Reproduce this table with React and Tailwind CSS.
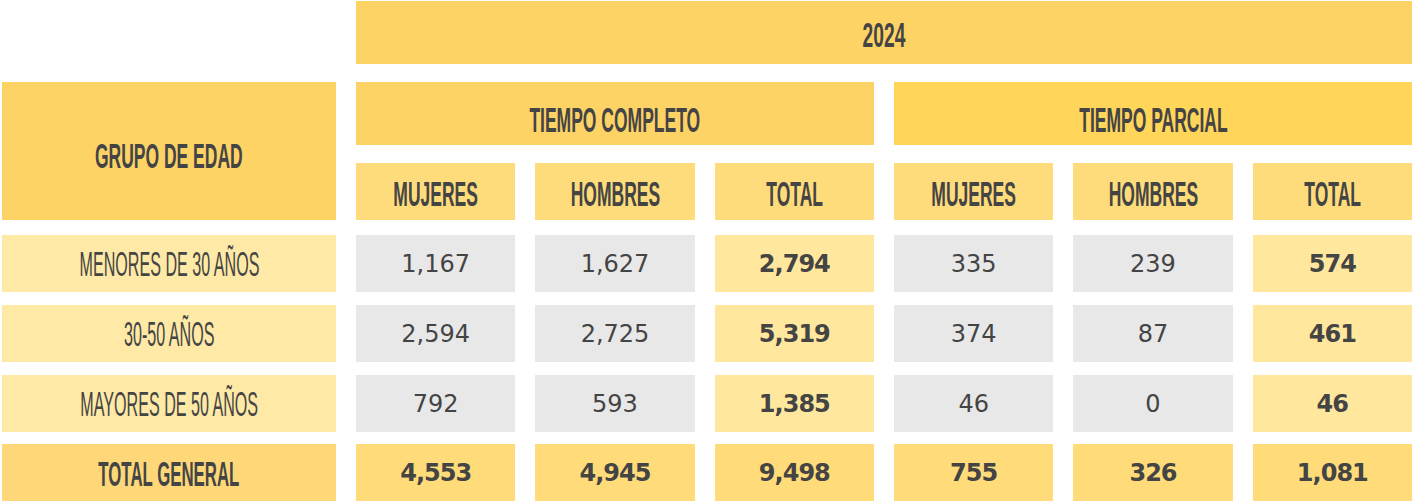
import React from "react";

const COLS = "grid grid-cols-[334px_repeat(6,minmax(0,1fr))] gap-x-5";
const COND = "inline-block whitespace-nowrap leading-none text-[35px] text-[#444] font-['Liberation_Sans',Arial,sans-serif]";
const NUM = "leading-none text-[24px] text-[#444] font-['DejaVu_Sans',sans-serif]";

function Head({ children, className = "" }) {
  return <span className={`${COND} font-bold scale-x-50 ${className}`}>{children}</span>;
}

function Label({ children, bold }) {
  return bold ? (
    <span className={`${COND} font-bold scale-x-[0.48] pt-[2px]`}>{children}</span>
  ) : (
    <span className={`${COND} font-normal scale-x-[0.46]`}>{children}</span>
  );
}

const rows = [
  { label: "MENORES DE 30 AÑOS", v: ["1,167", "1,627", "2,794", "335", "239", "574"] },
  { label: "30-50 AÑOS", v: ["2,594", "2,725", "5,319", "374", "87", "461"] },
  { label: "MAYORES DE 50 AÑOS", v: ["792", "593", "1,385", "46", "0", "46"] },
];
const totals = ["4,553", "4,945", "9,498", "755", "326", "1,081"];
const rowMargins = ["mt-[15px]", "mt-[13px]", "mt-[13px]"];

export default function App() {
  return (
    <div className="w-[1412px] h-[503px] bg-white pl-[2px] pt-[1px] overflow-hidden">
      <div className={COLS}>
        <div className="col-start-2 col-span-6 h-[63px] bg-[#FED366] flex items-center justify-center overflow-hidden">
          <span className={`${COND} font-bold scale-x-[0.55] pt-[4px]`}>2024</span>
        </div>
      </div>

      <div className={`${COLS} mt-[18px] grid-rows-[63px_57px] gap-y-[18px]`}>
        <div className="row-span-2 bg-[#FED366] flex items-center justify-center overflow-hidden">
          <Head className="pt-[9px]">GRUPO DE EDAD</Head>
        </div>
        <div className="col-span-3 bg-[#FED365] flex items-center justify-center overflow-hidden">
          <Head className="pt-[11px]">TIEMPO COMPLETO</Head>
        </div>
        <div className="col-span-3 bg-[#FFD55A] flex items-center justify-center overflow-hidden">
          <Head className="pt-[11px]">TIEMPO PARCIAL</Head>
        </div>
        {["MUJERES", "HOMBRES", "TOTAL", "MUJERES", "HOMBRES", "TOTAL"].map((t, i) => (
          <div key={i} className="bg-[#FFDC7B] flex items-center justify-center overflow-hidden">
            <Head className="pt-[3px]">{t}</Head>
          </div>
        ))}
      </div>

      {rows.map((r, ri) => (
        <div key={ri} className={`${COLS} h-[57px] ${rowMargins[ri]}`}>
          <div className="bg-[#FEE9A6] flex items-center justify-center overflow-hidden">
            <Label>{r.label}</Label>
          </div>
          {r.v.map((n, i) => {
            const isTotal = i === 2 || i === 5;
            return (
              <div
                key={i}
                className={`flex items-center justify-center ${isTotal ? "bg-[#FFE79E]" : "bg-[#E8E8E8]"}`}
              >
                <span className={`${NUM} ${isTotal ? "font-bold tracking-[-1px]" : "font-normal"}`}>{n}</span>
              </div>
            );
          })}
        </div>
      ))}

      <div className={`${COLS} h-[57px] mt-[12px]`}>
        <div className="bg-[#FED878] flex items-center justify-center overflow-hidden">
          <Label bold>TOTAL GENERAL</Label>
        </div>
        {totals.map((n, i) => (
          <div key={i} className="bg-[#FFDB79] flex items-center justify-center">
            <span className={`${NUM} font-bold tracking-[-1px]`}>{n}</span>
          </div>
        ))}
      </div>
    </div>
  );
}
